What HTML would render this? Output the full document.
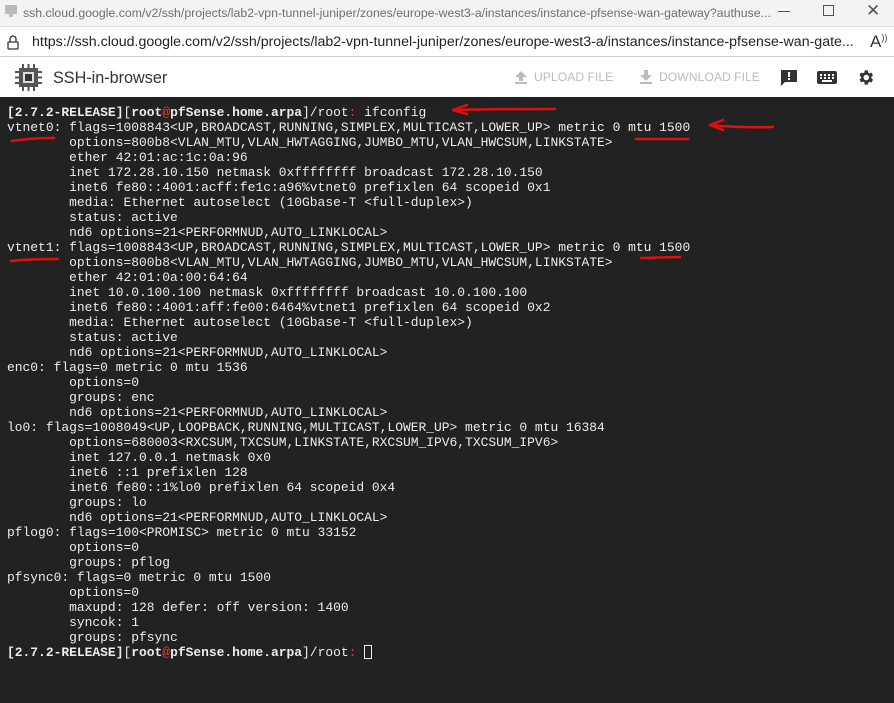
<!DOCTYPE html>
<html><head><meta charset="utf-8"><style>
*{margin:0;padding:0;box-sizing:border-box}
body{width:894px;height:703px;overflow:hidden;background:#222;font-family:"Liberation Sans",sans-serif;position:relative}
#tb{position:absolute;top:0;left:0;width:894px;height:26px;background:#f3f3f3;color:#6f6f6f;font-size:12.3px}
#ab{position:absolute;top:26px;left:0;width:894px;height:31px;background:#fff;border-top:1px solid #ddd;border-bottom:1px solid #ccc;font-size:14.2px;color:#222}
#hd{position:absolute;top:57px;left:0;width:894px;height:40px;background:#fff}
#term{position:absolute;top:97px;left:0;width:894px;height:606px;background:#222}
pre{position:absolute;top:105px;left:7px;font-family:"Liberation Mono",monospace;font-size:12.95px;line-height:15px;color:#ececec}
b{font-weight:bold}
.r{color:#e53935}
</style></head><body>
<div id="tb">
<svg style="position:absolute;left:4px;top:4px" width="14" height="14"><rect x="1" y="1" width="12" height="9" fill="#bbb"/><rect x="5" y="10" width="4" height="3" fill="#bbb"/></svg>
<div style="position:absolute;left:23px;top:6px;width:285px;white-space:nowrap;width:auto">ssh.cloud.google.com/v2/ssh/projects/lab2-vpn-tunnel-juniper/zones/europe-west3-a/instances/instance-pfsense-wan-gateway?authuse...</div>
<div style="position:absolute;left:770px;top:0;width:124px;height:26px;background:#f3f3f3"></div>
<div style="position:absolute;left:778px;top:11px;width:12px;height:1px;background:#555"></div>
<div style="position:absolute;left:823px;top:5px;width:11px;height:11px;border:1px solid #555"></div>
<div style="position:absolute;left:866px;top:1px;font-size:17px;color:#555">✕</div>
</div>
<div id="ab">
<svg style="position:absolute;left:7px;top:8px" width="12" height="15"><path d="M3 7V4a3 3 0 0 1 6 0v3" fill="none" stroke="#333" stroke-width="1.3"/><rect x="1" y="7" width="10" height="7" rx="1" fill="none" stroke="#333" stroke-width="1.3"/></svg>
<div style="position:absolute;left:32px;top:7px;white-space:nowrap">https://ssh.cloud.google.com/v2/ssh/projects/lab2-vpn-tunnel-juniper/zones/europe-west3-a/instances/instance-pfsense-wan-gate...</div>
<div style="position:absolute;left:862px;top:0;width:32px;height:29px;background:#fff"></div>
<div style="position:absolute;left:870px;top:5px;font-size:17px;color:#333">A<sup style="font-size:9px">))</sup></div>
</div>
<div id="hd">
<svg style="position:absolute;left:15px;top:7px" width="27" height="27"><g fill="#555"><rect x="4" y="4" width="19" height="19"/></g><rect x="8" y="8" width="11" height="11" fill="#ddd"/><rect x="10" y="10" width="7" height="7" fill="#333"/><g stroke="#555" stroke-width="2"><path d="M8 0v4M13.5 0v4M19 0v4M8 23v4M13.5 23v4M19 23v4M0 8h4M0 13.5h4M0 19h4M23 8h4M23 13.5h4M23 19h4"/></g></svg>
<div style="position:absolute;left:53px;top:12px;font-size:16.2px;color:#333">SSH-in-browser</div>
<svg style="position:absolute;left:514px;top:13px" width="14" height="14"><path d="M7 1L1 7h4v4h4V7h4z M1 12h12v2H1z" fill="#bbb"/></svg>
<div style="position:absolute;left:534px;top:13px;font-size:12.2px;color:#bbb">UPLOAD FILE</div>
<svg style="position:absolute;left:639px;top:13px" width="14" height="14"><path d="M5 0h4v5h4L7 11 1 5h4z M1 12h12v2H1z" fill="#bbb"/></svg>
<div style="position:absolute;left:659px;top:13px;font-size:12.2px;color:#bbb">DOWNLOAD FILE</div>
<svg style="position:absolute;left:780px;top:12px" width="18" height="18"><path d="M1 1h16v12H5l-4 4z" fill="#333"/><rect x="8" y="3" width="2" height="5" fill="#fff"/><rect x="8" y="9" width="2" height="2" fill="#fff"/></svg>
<svg style="position:absolute;left:817px;top:14px" width="20" height="14"><rect x="0" y="0" width="20" height="13" rx="2" fill="#333"/><g fill="#fff"><rect x="3" y="3" width="2" height="2"/><rect x="7" y="3" width="2" height="2"/><rect x="11" y="3" width="2" height="2"/><rect x="15" y="3" width="2" height="2"/><rect x="3" y="6" width="2" height="2"/><rect x="7" y="6" width="2" height="2"/><rect x="11" y="6" width="2" height="2"/><rect x="15" y="6" width="2" height="2"/><rect x="5" y="9" width="10" height="2"/></g></svg>
<svg style="position:absolute;left:856px;top:11px" width="19" height="19" viewBox="0 0 24 24"><path fill="#333" d="M19.4 13a7.5 7.5 0 0 0 0-2l2.1-1.6-2-3.5-2.5 1a7 7 0 0 0-1.7-1L15 3h-4l-.4 2.7a7 7 0 0 0-1.7 1l-2.5-1-2 3.5L6.6 11a7.5 7.5 0 0 0 0 2l-2.1 1.6 2 3.5 2.5-1a7 7 0 0 0 1.7 1L11 21h4l.4-2.7a7 7 0 0 0 1.7-1l2.5 1 2-3.5zM13 15.5a3.5 3.5 0 1 1 0-7 3.5 3.5 0 0 1 0 7z"/></svg>
</div>
<div id="term"></div>
<pre><b>[2.7.2-RELEASE]</b>[<b>root</b><span class="r">@</span><b>pfSense.home.arpa</b>]/root<span class="r">:</span> ifconfig
vtnet0: flags=1008843&lt;UP,BROADCAST,RUNNING,SIMPLEX,MULTICAST,LOWER_UP&gt; metric 0 mtu 1500
        options=800b8&lt;VLAN_MTU,VLAN_HWTAGGING,JUMBO_MTU,VLAN_HWCSUM,LINKSTATE&gt;
        ether 42:01:ac:1c:0a:96
        inet 172.28.10.150 netmask 0xffffffff broadcast 172.28.10.150
        inet6 fe80::4001:acff:fe1c:a96%vtnet0 prefixlen 64 scopeid 0x1
        media: Ethernet autoselect (10Gbase-T &lt;full-duplex&gt;)
        status: active
        nd6 options=21&lt;PERFORMNUD,AUTO_LINKLOCAL&gt;
vtnet1: flags=1008843&lt;UP,BROADCAST,RUNNING,SIMPLEX,MULTICAST,LOWER_UP&gt; metric 0 mtu 1500
        options=800b8&lt;VLAN_MTU,VLAN_HWTAGGING,JUMBO_MTU,VLAN_HWCSUM,LINKSTATE&gt;
        ether 42:01:0a:00:64:64
        inet 10.0.100.100 netmask 0xffffffff broadcast 10.0.100.100
        inet6 fe80::4001:aff:fe00:6464%vtnet1 prefixlen 64 scopeid 0x2
        media: Ethernet autoselect (10Gbase-T &lt;full-duplex&gt;)
        status: active
        nd6 options=21&lt;PERFORMNUD,AUTO_LINKLOCAL&gt;
enc0: flags=0 metric 0 mtu 1536
        options=0
        groups: enc
        nd6 options=21&lt;PERFORMNUD,AUTO_LINKLOCAL&gt;
lo0: flags=1008049&lt;UP,LOOPBACK,RUNNING,MULTICAST,LOWER_UP&gt; metric 0 mtu 16384
        options=680003&lt;RXCSUM,TXCSUM,LINKSTATE,RXCSUM_IPV6,TXCSUM_IPV6&gt;
        inet 127.0.0.1 netmask 0x0
        inet6 ::1 prefixlen 128
        inet6 fe80::1%lo0 prefixlen 64 scopeid 0x4
        groups: lo
        nd6 options=21&lt;PERFORMNUD,AUTO_LINKLOCAL&gt;
pflog0: flags=100&lt;PROMISC&gt; metric 0 mtu 33152
        options=0
        groups: pflog
pfsync0: flags=0 metric 0 mtu 1500
        options=0
        maxupd: 128 defer: off version: 1400
        syncok: 1
        groups: pfsync
<b>[2.7.2-RELEASE]</b>[<b>root</b><span class="r">@</span><b>pfSense.home.arpa</b>]/root<span class="r">:</span> <span style="display:inline-block;width:8px;height:14px;border:1.5px solid #eee;vertical-align:-3px"></span></pre>
<svg style="position:absolute;left:0;top:0" width="894" height="703">
<g stroke="#e01010" stroke-width="2.5" fill="none" stroke-linecap="round">
<path d="M453 110 Q500 109 555 109"/><path d="M453 110 L467 105 M453 110 L467 114"/>
<path d="M12 141 Q30 138 54 138"/>
<path d="M636 139 L688 139"/>
<path d="M710 125 Q740 128 773 127"/><path d="M710 125 L723 120 M710 125 L723 130"/>
<path d="M11 261 Q30 259 58 259"/>
<path d="M641 258 L680 257"/>
</g></svg>
</body></html>
